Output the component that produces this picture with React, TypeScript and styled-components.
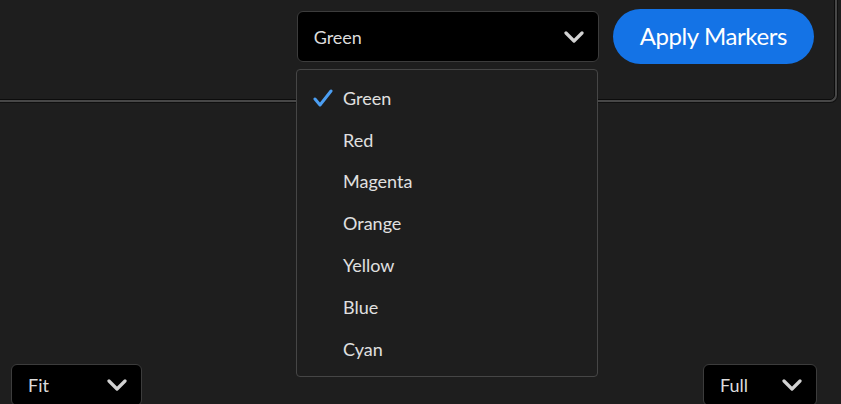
import React, { useState } from "react";
import styled, { createGlobalStyle } from "styled-components";

const GlobalStyle = createGlobalStyle`
  html, body {
    margin: 0;
    padding: 0;
    background: #1e1e1e;
  }
  body {
    font-family: Lato, "Open Sans", "Liberation Sans", sans-serif;
  }
`;

const Page = styled.div`
  position: relative;
  width: 841px;
  height: 404px;
  overflow: hidden;
  display: flex;
  flex-direction: column;
  justify-content: space-between;
  background: #1e1e1e;
`;

const TopPanel = styled.section`
  box-sizing: border-box;
  height: 110px;
  margin: -10px 6px 0 -10px;
  padding: 18px 20px 0 0;
  display: flex;
  align-items: flex-start;
  justify-content: flex-end;
  gap: 14px;
  background: #1e1e1e;
  border: 1px solid #0c0c0c;
  border-radius: 5px;
  box-shadow: 0 0 0 2px #474747, 0 0 0 3px #101010;
`;

const SelectBox = styled.div<{ $width: number; $height?: number }>`
  box-sizing: border-box;
  width: ${(p) => p.$width}px;
  height: ${(p) => p.$height ?? 51}px;
  padding: 0 14px 0 16px;
  display: flex;
  align-items: center;
  justify-content: space-between;
  background: #000;
  border: 1px solid #3c3c3c;
  border-radius: 6px;
  color: #dcdcdc;
  font-size: 18px;
  cursor: pointer;
`;

const SelectWrap = styled.div`
  margin-top: 2px;
`;

const ApplyButton = styled.button`
  height: 55px;
  padding: 0 27px 2px;
  border: none;
  border-radius: 28px;
  background: #1473e6;
  color: #fff;
  font-family: Lato, "Open Sans", "Liberation Sans", sans-serif;
  font-size: 24px;
  letter-spacing: -0.4px;
  cursor: pointer;
`;

const Menu = styled.ul`
  position: absolute;
  left: 296px;
  top: 69px;
  box-sizing: border-box;
  width: 302px;
  margin: 0;
  padding: 7px 0 6px;
  list-style: none;
  background: #1e1e1e;
  border: 1px solid #464646;
  border-radius: 4px;
`;

const MenuItem = styled.li`
  height: 41.8px;
  display: flex;
  align-items: center;
  padding-left: 16px;
  color: #e0e0e0;
  font-size: 18px;
  cursor: pointer;
`;

const CheckSlot = styled.span`
  width: 30px;
  display: flex;
  align-items: center;
`;

const BottomBar = styled.div`
  height: 40px;
  display: flex;
  align-items: flex-start;
  justify-content: space-between;
  padding: 0 24px 0 11px;
`;

const Chevron = () => (
  <svg width="20" height="12" viewBox="0 0 20 12">
    <polyline
      points="2,2 10,10 18,2"
      fill="none"
      stroke="#d2d2d2"
      strokeWidth="3.2"
      strokeLinecap="round"
      strokeLinejoin="round"
    />
  </svg>
);

const Check = () => (
  <svg width="20" height="18" viewBox="0 0 20 18">
    <polyline
      points="2,10 7,16 18,2"
      fill="none"
      stroke="#4b9ef2"
      strokeWidth="3"
      strokeLinecap="round"
      strokeLinejoin="round"
    />
  </svg>
);

const colors = ["Green", "Red", "Magenta", "Orange", "Yellow", "Blue", "Cyan"];

export default function App() {
  const [color, setColor] = useState("Green");

  return (
    <Page>
      <GlobalStyle />
      <TopPanel>
        <SelectWrap>
          <SelectBox $width={302}>
            <span>{color}</span>
            <Chevron />
          </SelectBox>
        </SelectWrap>
        <ApplyButton>Apply Markers</ApplyButton>
      </TopPanel>

      <Menu>
        {colors.map((c) => (
          <MenuItem key={c} onClick={() => setColor(c)}>
            <CheckSlot>{c === color && <Check />}</CheckSlot>
            {c}
          </MenuItem>
        ))}
      </Menu>

      <BottomBar>
        <SelectBox $width={131} $height={42}>
          <span>Fit</span>
          <Chevron />
        </SelectBox>
        <SelectBox $width={114} $height={42}>
          <span>Full</span>
          <Chevron />
        </SelectBox>
      </BottomBar>
    </Page>
  );
}
